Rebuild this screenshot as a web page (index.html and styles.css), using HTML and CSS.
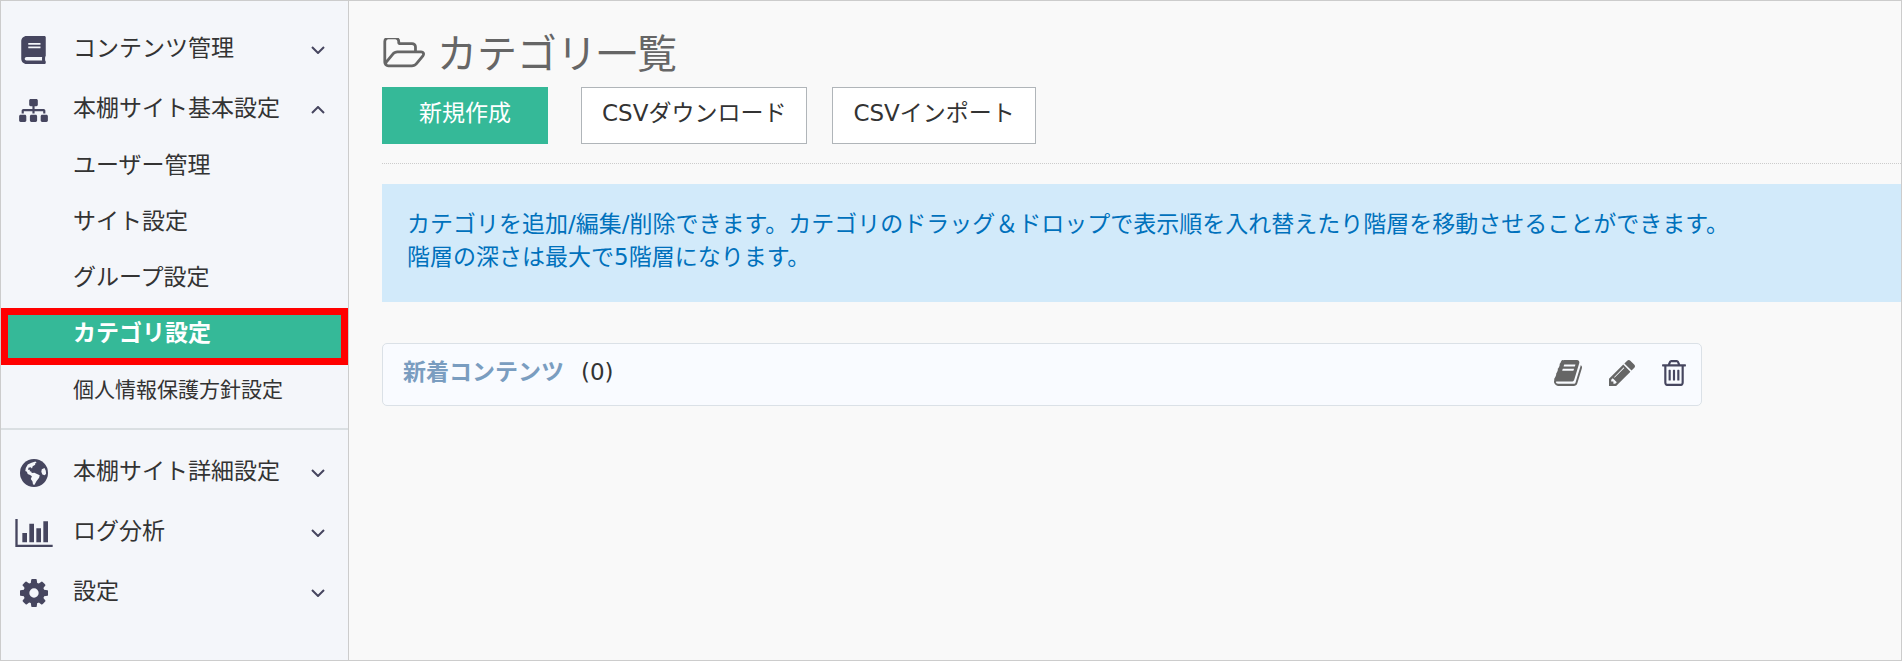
FILE: index.html
```
<!DOCTYPE html>
<html lang="ja">

<head>
    <meta charset="UTF-8" />
    <meta name="viewport" content="width=device-width, initial-scale=1" />
    <title>カテゴリ一覧</title>
    <link rel="stylesheet" href="styles.css">
</head>

<body>
    <nav class="sidebar">
        <ul class="menu">
            <li>
                <a class="menu-item" href="#">
                    <span class="menu-icon"><svg width="25" height="28" viewBox="0 0 448 512"><path d="M448 360V24c0-13.300-10.700-24-24-24H96C43 0 0 43 0 96v320c0 53 43 96 96 96h328c13.300 0 24-10.700 24-24v-16c0-7.500-3.500-14.300-8.900-18.700-4.200-15.400-4.200-59.300 0-74.700 5.400-4.300 8.900-11.100 8.900-18.600zM128 134c0-3.300 2.700-6 6-6h212c3.300 0 6 2.700 6 6v20c0 3.300-2.700 6-6 6H134c-3.300 0-6-2.700-6-6v-20zm0 64c0-3.300 2.700-6 6-6h212c3.300 0 6 2.700 6 6v20c0 3.300-2.700 6-6 6H134c-3.300 0-6-2.700-6-6v-20zm253.400 250H96c-17.700 0-32-14.300-32-32 0-17.600 14.400-32 32-32h285.400c-1.900 17.100-1.900 46.900 0 64z"/></svg></span>
                    <span class="menu-label">コンテンツ管理</span>
                    <svg class="arrow" width="14" height="8" viewBox="0 0 14 8"><path d="M1 1l6 6 6-6"/></svg>
                </a>
            </li>
            <li>
                <a class="menu-item" href="#">
                    <span class="menu-icon"><svg width="29" height="23" viewBox="0 0 640 512"><path d="M128 352H32c-17.670 0-32 14.330-32 32v96c0 17.670 14.330 32 32 32h96c17.670 0 32-14.330 32-32v-96c0-17.670-14.330-32-32-32zm-24-80h192v48h48v-48h192v48h48v-57.590c0-21.170-17.230-38.410-38.410-38.410H344v-64h40c17.670 0 32-14.330 32-32V32c0-17.670-14.330-32-32-32H256c-17.670 0-32 14.330-32 32v96c0 17.670 14.330 32 32 32h40v64H94.410C73.230 224 56 241.230 56 262.410V320h48v-48zm264 80h-96c-17.670 0-32 14.330-32 32v96c0 17.670 14.330 32 32 32h96c17.670 0 32-14.330 32-32v-96c0-17.670-14.330-32-32-32zm240 0h-96c-17.670 0-32 14.330-32 32v96c0 17.670 14.330 32 32 32h96c17.670 0 32-14.330 32-32v-96c0-17.670-14.330-32-32-32z"/></svg></span>
                    <span class="menu-label">本棚サイト基本設定</span>
                    <svg class="arrow" width="14" height="8" viewBox="0 0 14 8"><path d="M1 7l6-6 6 6"/></svg>
                </a>
                <ul class="submenu">
                    <li><a href="#">ユーザー管理</a></li>
                    <li><a href="#">サイト設定</a></li>
                    <li><a href="#">グループ設定</a></li>
                    <li><a class="active" href="#">カテゴリ設定</a></li>
                    <li><a class="small" href="#">個人情報保護方針設定</a></li>
                </ul>
            </li>
        </ul>
        <ul class="menu menu-bottom">
            <li>
                <a class="menu-item" href="#">
                    <span class="menu-icon"><svg width="28" height="28" viewBox="0 0 28 28"><circle cx="14" cy="14" r="14"/><path class="land" d="M15.500 2.500l-4 1.200-3.700 1.800-2 3.600L5.300 12l1.600.8.8 2.300 2.400.8 1.800 1.300-1.100 2.700 1.700 2.600.5 3 1.600.3 1.800-3.600 2.700-3.500.6-2.500-2.700-1.300-2.600-1.200-2.600.3-.6-1.500-1.500-.3.300-1.400-1.800.2.200-2.200 2.200-.6 1.400 1.400.7-2.300 2.600-1.600-.4-1.200 1.700-.5zM21.800 10.200l2.700-1.100 1.300 2.700.3 3-1.400 1.400-2.300-.8-1.100-2.600z"/></svg></span>
                    <span class="menu-label">本棚サイト詳細設定</span>
                    <svg class="arrow" width="14" height="8" viewBox="0 0 14 8"><path d="M1 1l6 6 6-6"/></svg>
                </a>
            </li>
            <li>
                <a class="menu-item" href="#">
                    <span class="menu-icon"><svg width="38" height="28" viewBox="0 128 2048 1536"><path d="M640 896v512h-256v-512h256zm384-512v1024h-256v-1024h256zm1024 1152v128h-2048v-1536h128v1408h1920zm-640-896v768h-256v-768h256zm384-384v1152h-256v-1152h256z"/></svg></span>
                    <span class="menu-label">ログ分析</span>
                    <svg class="arrow" width="14" height="8" viewBox="0 0 14 8"><path d="M1 1l6 6 6-6"/></svg>
                </a>
            </li>
            <li>
                <a class="menu-item" href="#">
                    <span class="menu-icon"><svg width="28" height="28" viewBox="128 128 1536 1536"><path d="M1152 896q0-106-75-181t-181-75-181 75-75 181 75 181 181 75 181-75 75-181zm512-109v222q0 12-8 23t-20 13l-185 28q-19 54-39 91 35 50 107 138 10 12 10 25t-9 23q-27 37-99 108t-94 71q-12 0-26-9l-138-108q-44 23-91 38-16 136-29 186-7 28-36 28h-222q-14 0-24.500-8.500t-11.500-21.500l-28-184q-49-16-90-37l-141 107q-10 9-25 9-14 0-25-11-126-114-165-168-7-10-7-23 0-12 8-23 15-21 51-66.500t54-70.500q-27-50-41-99l-183-27q-13-2-21-12.500t-8-23.500v-222q0-12 8-23t19-13l186-28q14-46 39-92-40-57-107-138-10-12-10-24 0-10 9-23 26-36 98.500-107.500t94.500-71.500q13 0 26 10l138 107q44-23 91-38 16-136 29-186 7-28 36-28h222q14 0 24.500 8.500t11.500 21.500l28 184q49 16 90 37l142-107q9-9 24-9 13 0 25 10 129 119 165 170 7 8 7 22 0 12-8 23-15 21-51 66.500t-54 70.500q26 50 41 98l183 28q13 2 21 12.500t8 23.500z"/></svg></span>
                    <span class="menu-label">設定</span>
                    <svg class="arrow" width="14" height="8" viewBox="0 0 14 8"><path d="M1 1l6 6 6-6"/></svg>
                </a>
            </li>
        </ul>
    </nav>

    <main class="content">
        <h1 class="page-title">
            <svg width="43" height="32" viewBox="0 224 1973 1408"><path d="M1845 931q0-35-53-35h-1088q-40 0-85.500 21.500t-71.500 52.500l-294 363q-18 24-18 40 0 35 53 35h1088q40 0 86-22t71-53l294-363q18-22 18-39zm-1141-163h768v-160q0-40-28-68t-68-28h-576q-40 0-68-28t-28-68v-64q0-40-28-68t-68-28h-320q-40 0-68 28t-28 68v853l256-315q44-53 116-87.500t140-34.500zm1269 163q0 62-46 120l-295 363q-43 53-116 87.500t-140 34.500h-1088q-92 0-158-66t-66-158v-960q0-92 66-158t158-66h320q92 0 158 66t66 158v32h544q92 0 158 66t66 158v160h192q54 0 99 24.500t67 70.500q15 32 15 68z"/></svg>
            カテゴリ一覧
        </h1>

        <div class="toolbar">
            <button class="btn btn-primary">新規作成</button>
            <button class="btn">CSVダウンロード</button>
            <button class="btn">CSVインポート</button>
        </div>

        <p class="info">
            カテゴリを追加/編集/削除できます。カテゴリのドラッグ＆ドロップで表示順を入れ替えたり階層を移動させることができます。<br>
            階層の深さは最大で5階層になります。
        </p>

        <ul class="category-list">
            <li class="category">
                <a class="category-name" href="#">新着コンテンツ</a>
                <span class="category-count">(0)</span>
                <div class="actions">
                    <button class="action" aria-label="コンテンツ"><svg width="28" height="26" viewBox="64 128 1664 1536"><path d="M1703 478q40 57 18 129l-275 906q-19 64-76.500 107.500t-122.500 43.500h-923q-77 0-148.500-53.500t-99.500-131.500q-24-67-2-127 0-4 3-27t4-37q1-8-3-21.500t-3-19.500q2-11 8-21t16.500-23.500 16.500-23.500q23-38 45-91.500t30-91.500q3-10 .5-30t-.5-28q3-11 17-28t17-23q21-36 42-92t25-90q1-9-2.500-32t.5-28q4-13 22-30.500t22-22.500q19-26 42.500-84.500t27.500-96.500q1-8-3-25.500t-2-26.500q2-8 9-18t18-23 17-21q8-12 16.500-30.500t15-35 16-36 19.500-32 26.500-23.500 36-11.500 47.500 5.500l-1 3q38-9 51-9h761q74 0 114 56t18 130l-274 906q-36 119-71.500 153.500t-128.500 34.500h-869q-27 0-38 15-11 16-1 43 24 70 144 70h923q29 0 56-15.500t35-41.500l300-987q7-22 5-57 38 15 59 43zm-1064 2q-4 13 2 22.500t20 9.500h608q13 0 25.500-9.500t16.500-22.500l21-64q4-13-2-22.500t-20-9.500h-608q-13 0-25.500 9.500t-16.500 22.500zm-83 256q-4 13 2 22.500t20 9.500h608q13 0 25.500-9.500t16.500-22.500l21-64q4-13-2-22.500t-20-9.500h-608q-13 0-25.500 9.500t-16.500 22.500z"/></svg></button>
                    <button class="action" aria-label="編集"><svg width="26" height="26" viewBox="128 149 1515 1515"><path d="M491 1536l91-91-235-235-91 91v107h128v128h107zm523-928q0-22-22-22-10 0-17 7l-542 542q-7 7-7 17 0 22 22 22 10 0 17-7l542-542q7-7 7-17zm-54-192l416 416-832 832h-416v-416zm683 96q0 53-37 90l-166 166-416-416 166-165q36-38 90-38 53 0 91 38l235 234q37 39 37 91z"/></svg></button>
                    <button class="action action-delete" aria-label="削除"><svg width="24" height="26" viewBox="192 128 1408 1536"><path d="M704 736v576q0 14-9 23t-23 9h-64q-14 0-23-9t-9-23v-576q0-14 9-23t23-9h64q14 0 23 9t9 23zm256 0v576q0 14-9 23t-23 9h-64q-14 0-23-9t-9-23v-576q0-14 9-23t23-9h64q14 0 23 9t9 23zm256 0v576q0 14-9 23t-23 9h-64q-14 0-23-9t-9-23v-576q0-14 9-23t23-9h64q14 0 23 9t9 23zm128 724v-948h-896v948q0 22 7 40.500t14.500 27 10.500 8.500h832q3 0 10.500-8.500t14.500-27 7-40.500zm-672-1076h448l-48-117q-7-9-17-11h-317q-10 2-17 11zm928 32v64q0 14-9 23t-23 9h-96v948q0 83-47 143.500t-113 60.500h-832q-66 0-113-58.500t-47-141.500v-952h-96q-14 0-23-9t-9-23v-64q0-14 9-23t23-9h309l70-167q15-37 54-63t79-26h320q40 0 79 26t54 63l70 167h309q14 0 23 9t9 23z"/></svg></button>
                </div>
            </li>
        </ul>
    </main>
</body>

</html>
```

FILE: styles.css
```
* {
    box-sizing: border-box;
}

body {
    margin: 0;
    min-height: 100vh;
    display: flex;
    border: 1px solid #ccc;
    background-color: #f9f9f9;
    color: #333;
    font-family: "DejaVu Sans", "Noto Sans CJK JP", sans-serif;
    font-size: 23px;
    line-height: 33px;
}

ul {
    list-style: none;
    margin: 0;
    padding: 0;
}

a {
    color: inherit;
    text-decoration: none;
}

svg {
    display: block;
    fill: currentColor;
}

/* Sidebar */
.sidebar {
    flex: 0 0 348px;
    padding-top: 19px;
    background-color: #f4f6fa;
    border-right: 1px solid #ccc;
}

.menu-item {
    display: flex;
    align-items: center;
    height: 60px;
    padding-right: 23px;
}

.menu-icon {
    display: flex;
    justify-content: center;
    width: 65px;
    color: #46465f;
}

.menu-icon .land {
    fill: #f4f6fa;
}

.menu-label {
    flex: 1;
    padding: 0 0 4px 7px;
}

.arrow {
    fill: none;
    stroke: #46465f;
    stroke-width: 2;
}

.submenu a {
    display: block;
    height: 56px;
    padding: 9px 0 0 72px;
}

.submenu .active {
    height: 57px;
    padding: 2px 0 0 65px;
    border: 7px solid #f00;
    background-color: #35b998;
    color: #fff;
    font-weight: bold;
}

.submenu .small {
    font-size: 21px;
}

.menu-bottom {
    margin-top: 7px;
    padding-top: 13px;
    border-top: 2px solid #dadfe2;
}

/* Main area */
.content {
    flex: 1;
    min-width: 0;
    padding: 28px 0 0 33px;
}

.page-title {
    display: flex;
    align-items: center;
    gap: 12px;
    margin: 0;
    height: 50px;
    color: #666;
    font-size: 40px;
    font-weight: normal;
}

.toolbar {
    display: flex;
    padding: 8px 0 19px;
    border-bottom: 1px dotted #ccc;
}

.btn {
    height: 57px;
    margin-right: 25px;
    padding: 0 20px 4px;
    border: 1px solid #b0b5b9;
    background-color: #fff;
    color: #333;
    font: inherit;
    cursor: pointer;
}

.btn-primary {
    margin-right: 33px;
    padding: 0 36px 4px;
    border-color: #35b998;
    background-color: #35b998;
    color: #fff;
}

.info {
    margin: 20px 0 41px;
    padding: 24px 25px 28px;
    background-color: #d2eafa;
    color: #0071bc;
}

.category {
    display: flex;
    align-items: center;
    max-width: 1320px;
    height: 63px;
    padding: 0 15px 0 20px;
    border: 1px solid #dbe1e7;
    border-radius: 5px;
    background-color: #f9fbff;
}

.category-name {
    padding-bottom: 4px;
    color: #7a9dc0;
    font-weight: bold;
}

.category-count {
    padding: 0 0 4px 17px;
}

.actions {
    display: flex;
    gap: 27px;
    margin-left: auto;
    padding-bottom: 4px;
}

.action {
    padding: 0;
    border: none;
    background: none;
    color: #666;
    cursor: pointer;
}

.action-delete {
    color: #46465f;
}
```
